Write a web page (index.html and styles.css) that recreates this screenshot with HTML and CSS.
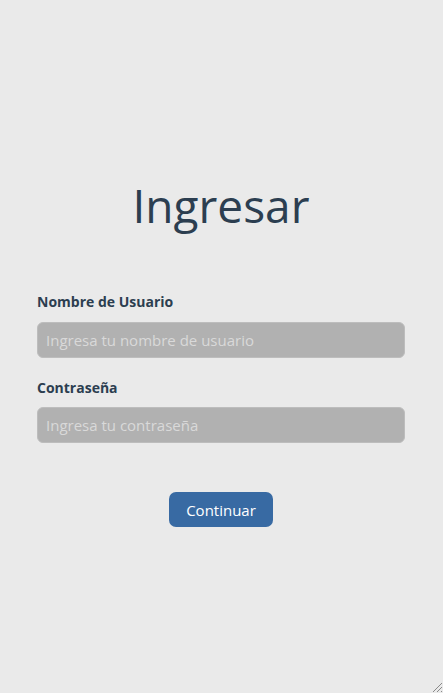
FILE: index.html
```html
<!DOCTYPE html>
<html lang="es">
<head>
<meta charset="utf-8">
<title>Ingresar</title>
<link rel="stylesheet" href="styles.css">
</head>
<body>
<main class="page">
  <h1 class="title">Ingresar</h1>
  <form class="form">
    <label class="label" for="user">Nombre de Usuario</label>
    <input class="input" id="user" type="text" placeholder="Ingresa tu nombre de usuario">
    <label class="label label-second" for="pass">Contraseña</label>
    <input class="input" id="pass" type="password" placeholder="Ingresa tu contraseña">
    <div class="actions">
      <button class="button" type="button">Continuar</button>
    </div>
  </form>
  <svg class="grip" width="12" height="12" viewBox="0 0 12 12" aria-hidden="true">
    <path d="M11 2 L2 11 M11 6 L6 11 M11 10 L10 11" stroke="#8a8a8a" stroke-width="1" fill="none"/>
  </svg>
</main>
</body>
</html>
```
FILE: styles.css
```css
html, body {
  margin: 0;
  padding: 0;
  height: 100%;
}
body {
  background: #eaeaea;
  font-family: "Open Sans", "Noto Sans", sans-serif;
  color: #2c3e50;
}
.page {
  position: relative;
  box-sizing: border-box;
  height: 100vh;
  padding: 177px 38px 0 37px;
}
.title {
  margin: 0;
  text-align: center;
  font-weight: 400;
  font-size: 46px;
  line-height: 56px;
  color: #2c3e50;
}
.form {
  display: flex;
  flex-direction: column;
  margin-top: 59px;
}
.label {
  font-weight: 700;
  font-size: 14px;
  line-height: 20px;
  margin-bottom: 10px;
  color: #2c3e50;
}
.label-second {
  margin-top: 20px;
  margin-bottom: 9px;
}
.input {
  box-sizing: border-box;
  height: 36px;
  width: 100%;
  margin: 0;
  padding: 0 8px;
  background: #b1b1b1;
  border: 1px solid #bdbdbd;
  border-radius: 6px;
  font-family: inherit;
  font-size: 15px;
  color: #333;
  outline: none;
}
.input::placeholder {
  color: #d9d9d9;
}
.actions {
  display: flex;
  justify-content: center;
  margin-top: 49px;
}
.button {
  box-sizing: border-box;
  width: 104px;
  height: 35px;
  border: none;
  border-radius: 7px;
  background: #386aa3;
  color: #ffffff;
  font-family: inherit;
  font-size: 15px;
  padding: 0;
  cursor: pointer;
}
.grip {
  position: absolute;
  right: 0;
  bottom: 0;
}
```
